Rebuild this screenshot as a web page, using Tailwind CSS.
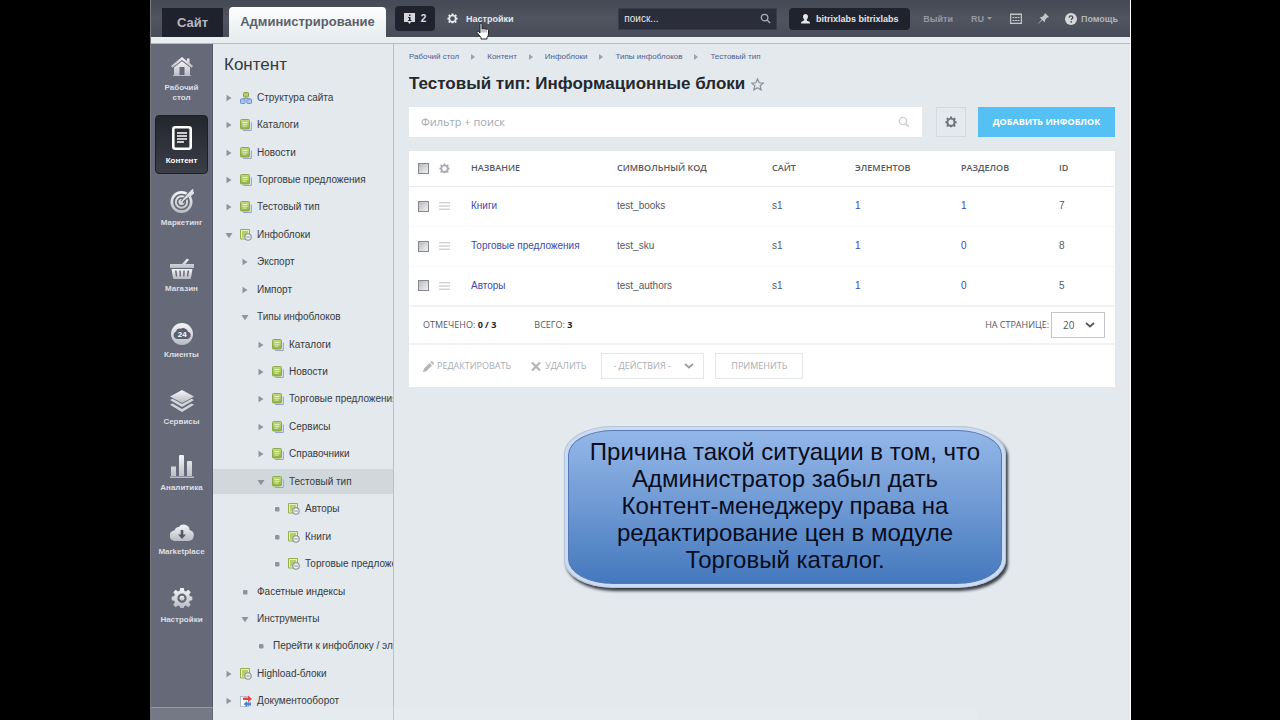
<!DOCTYPE html>
<html lang="ru">
<head>
<meta charset="utf-8">
<title>Тестовый тип: Информационные блоки</title>
<script src="https://cdn.jsdelivr.net/npm/@tailwindcss/browser@4"></script>
</head>
<body class="bg-black font-['Liberation_Sans',Arial,sans-serif] text-[10px] leading-3 text-[#363b40]">
<svg class="absolute h-0 w-0" aria-hidden="true">
  <defs>
    <linearGradient id="metal" x1="0" y1="0" x2="0" y2="1"><stop offset="0" stop-color="#f4f5f7"/><stop offset="1" stop-color="#b9bbc3"/></linearGradient>
    <linearGradient id="leaf" x1="0" y1="0" x2="0" y2="1"><stop offset="0" stop-color="#c3d97d"/><stop offset="1" stop-color="#8fb43a"/></linearGradient>
    <symbol id="arrow" viewBox="0 0 8 8"><path d="M1.500 .8 6.500 4 1.500 7.200z" fill="#8e949c"/></symbol>
    <symbol id="open" viewBox="0 0 8 8"><path d="M.5 2h7L4 7.200z" fill="#8e949c"/></symbol>
    <symbol id="dot" viewBox="0 0 8 8"><rect x="2" y="2" width="4.500" height="4.500" rx="1" fill="#8e949c"/></symbol>
    <symbol id="docs" viewBox="0 0 12 12"><path d="M3 11.400h8.300V3.500" fill="#e8ecf8" stroke="#8f9bcf" stroke-width="1"/><rect x=".5" y=".5" width="9" height="9.500" rx="1" fill="url(#leaf)" stroke="#8cab4c"/><path d="M2.500 3.500h5M2.500 5.300h5M2.500 7.100h4" stroke="#f1f7da" stroke-width=".8"/></symbol>
    <symbol id="docgear" viewBox="0 0 12 12"><path d="M.5.500h9v9.500h-9z" fill="#e2edc0" stroke="#94b14c"/><path d="M2 2h6v3L4 8.500H2z" fill="#b5d069"/><circle cx="8" cy="8" r="3.200" fill="#eceef0" stroke="#8d9298" stroke-width="1.100"/><path d="M6.300 8h3.400" stroke="#8d9298"/></symbol>
    <symbol id="struct" viewBox="0 0 12 12"><path d="M6 4v3M2.500 7.500v-1h7v1" stroke="#96a2b8" fill="none"/><rect x="3.500" y=".5" width="5" height="4.500" rx=".8" fill="#b4d062" stroke="#82a33d"/><rect x=".5" y="7" width="4.600" height="4.500" rx=".8" fill="#a9c5f3" stroke="#6a8fd6"/><rect x="6.900" y="7" width="4.600" height="4.500" rx=".8" fill="#a9c5f3" stroke="#6a8fd6"/></symbol>
    <symbol id="flow" viewBox="0 0 12 12"><rect x=".5" y="1.500" width="8" height="10" fill="#fff" stroke="#b4bccb"/><path d="M3 2.500h5V.5l4 3.500-4 3V5H3z" fill="#e0473f"/><path d="M11 7.500H7v-1.500L3.500 9 7 12v-1.500h4z" fill="#4f82d9"/></symbol>
    <symbol id="gear" viewBox="0 0 24 24"><path fill-rule="evenodd" d="M10 1h4l.6 3.200 1.900.8L19.200 3.100 22 5.900l-1.900 2.700.8 1.900 3.100.5v4l-3.200.6-.7 1.900 1.800 2.700-2.800 2.800-2.700-1.900-1.900.8L14 24h-4l-.6-2.100-1.900-.8-2.700 1.900L2 20.200l1.900-2.700-.8-1.900L0 15v-4l3.100-.5.8-1.900L2 5.900l2.800-2.800L7.500 5l1.900-.8zM12 7.500a5.300 5.300 0 1 0 0 10.600 5.300 5.300 0 0 0 0-10.600z"/></symbol>
    <symbol id="lens" viewBox="0 0 12 12"><circle cx="5" cy="5" r="3.600" fill="none" stroke="currentColor" stroke-width="1.400"/><path d="m7.700 7.700 3.300 3.300" stroke="currentColor" stroke-width="1.600"/></symbol>
    <symbol id="bars" viewBox="0 0 12 8"><path d="M0 .5h12M0 4h12M0 7.500h12" stroke="#b4b8be"/></symbol>
    <symbol id="chev" viewBox="0 0 10 6"><path d="m1 1 4 3.500L9 1" fill="none" stroke="currentColor" stroke-width="1.800"/></symbol>
  </defs>
</svg>

<div class="relative mr-[149px] ml-[150px] flex h-screen flex-col overflow-hidden border-r border-l border-r-white border-l-[#77797f] bg-[#e3e9ed]">
  <header class="flex h-[37px] shrink-0 items-center bg-linear-to-b from-[#454955] via-[#50545f] to-[#484c58] pr-3 pl-[11px] text-[10px] font-bold text-[#b6b9c1]">
    <a href="#" class="flex h-[29px] w-[61px] items-center justify-center self-end bg-[#1f222d] text-[13px] text-[#b5b8c0]">Сайт</a>
    <a href="#" class="ml-[6px] flex h-[30px] w-[157px] items-center justify-center self-end rounded-t-sm bg-linear-to-b from-white to-[#e6ecef] text-[13px] text-[#5d6169]">Администрирование</a>
    <a href="#" class="ml-[9px] flex h-[25px] w-10 items-center justify-center gap-[6px] rounded bg-[#20232e] text-[#dfe1e5]" aria-label="Уведомления: 2">
      <svg class="h-[11px] w-[11px]" viewBox="0 0 11 11"><path d="M0 0h11v9H7l-1.500 2L4 9H0z" fill="#d4d6db"/><path d="M5 1.500h1.500v1.500H5zM4 4h2.500v3H7.500v1H4V7h1V5H4z" fill="#20232e"/></svg>2</a>
    <a href="#" class="ml-3 flex items-center gap-2 text-[9px] text-[#e6e7ea]"><svg class="h-[11px] w-[11px]" fill="#e6e7ea" viewBox="0 0 24 25"><use href="#gear" width="24" height="24"/></svg>Настройки</a>
    <div class="flex-1"></div>
    <label class="flex h-[22px] w-[159px] items-center border border-[#3a3d49] bg-[#2b2e3a] pr-[5px] pl-[5px]">
      <input type="text" value="поиск..." aria-label="Поиск" class="w-0 min-w-0 flex-1 bg-transparent text-[10px] font-normal text-[#e6e7ea] outline-none">
      <svg class="h-[11px] w-[11px] text-[#a9acb5]"><use href="#lens"/></svg>
    </label>
    <a href="#" class="ml-3 flex h-[22px] w-[121px] items-center justify-center gap-[6px] rounded bg-[#20232e] text-[9px] text-[#e3e5e9]"><svg class="h-[10px] w-[9px]" viewBox="0 0 9 10" fill="#e3e5e9"><path d="M4.500 0C6 0 7 1 7 2.800 7 4.300 6.200 5 5.700 5.700c0 1.300.8 1.200 1.700 1.600C8.600 7.800 9 8 9 9.500H0C0 8 .4 7.800 1.600 7.300c.9-.4 1.700-.3 1.700-1.600C2.800 5 2 4.300 2 2.800 2 1 3 0 4.500 0z"/></svg>bitrixlabs bitrixlabs</a>
    <a href="#" class="ml-[13px] text-[9px] text-[#9598a2]">Выйти</a>
    <a href="#" class="ml-[18px] flex items-center gap-[3px] text-[9px] text-[#9598a2]">RU<svg class="h-[3px] w-[5px]" viewBox="0 0 5 3"><path d="M0 0h5L2.500 3z" fill="#9598a2"/></svg></a>
    <a href="#" aria-label="Панель" class="ml-[18px]"><svg class="h-[11px] w-3" viewBox="0 0 12 11"><path d="M.6 1h10.800v9.400H.6zM0 1.500h12" fill="none" stroke="#c3c5cc" stroke-width="1.200"/><path d="M2.500 4.500h7M2.500 7.500h7" stroke="#c3c5cc" stroke-dasharray="2 .5"/></svg></a>
    <a href="#" aria-label="Закрепить" class="ml-4"><svg class="h-[11px] w-[11px]" viewBox="0 0 11 11"><path d="M7 0l4 4-1 .7-.8-.1L6.900 7c.3 1 .1 1.700-.4 2.300L4.300 7.100.6 10.700l-.3-.3L3.700 6.500 1.700 4.500c.6-.6 1.500-.7 2.300-.4l2.400-2.300V1z" fill="#c3c5cc"/></svg></a>
    <a href="#" class="ml-4 flex items-center gap-1 text-[9px] text-[#b0b3bb]"><svg class="h-3 w-3" viewBox="0 0 12 12"><circle cx="6" cy="6" r="6" fill="#d6d8dc"/><path d="M4.200 4.700C4.200 3.400 5 2.900 6 2.900s1.800.6 1.800 1.600C7.800 5.700 6.200 5.800 6.200 7" fill="none" stroke="#4b4f5b" stroke-width="1.400"/><circle cx="6.200" cy="8.800" r=".9" fill="#4b4f5b"/></svg>Помощь</a>
  </header>
  <div class="flex h-[7px] shrink-0 border-b border-[#b4bec2] bg-[#e8edf0]"></div>

  <div class="flex min-h-0 flex-1">
    <nav class="w-[62px] shrink-0 border-r border-[#565967] bg-[#666977] text-center text-[8px] leading-[10px] font-bold text-[#dddfe4]">
      <a href="#" class="flex h-[71px] flex-col items-center pt-[13px]"><svg class="mb-[7px] h-[19px] w-[22px]" viewBox="0 0 22 19"><path d="M11 0 0 9l1.500 1.700L11 3l9.500 7.700L22 9l-3.500-3V1.500H16V4z" fill="url(#metal)"/><path fill-rule="evenodd" d="M3 10.500 11 4.200l8 6.300V18h1v1H2v-1h1zM8.500 10v8h5v-8z" fill="url(#metal)"/></svg>Рабочий<br>стол</a>
      <a href="#" class="mx-1 flex h-[59px] flex-col items-center rounded border border-[#1d1f26] bg-linear-to-b from-[#24262e] to-[#3b3e47] pt-[10px] text-white"><svg class="mb-[6px] h-[24px] w-[20px]" viewBox="0 0 20 24"><rect x="1.300" y="1.300" width="17.400" height="21.400" rx="2" fill="none" stroke="#fff" stroke-width="2.600"/><path d="M5 7h10M5 10h10M5 13h10M5 16h7" stroke="#fff" stroke-width="1.300"/></svg>Контент</a>
      <a href="#" class="flex h-[54px] flex-col items-center justify-end"><svg class="mb-[5px] h-[24px] w-6" viewBox="0 0 24 24"><circle cx="11.500" cy="13" r="11" fill="url(#metal)"/><circle cx="11.500" cy="13" r="7.500" fill="none" stroke="#666977" stroke-width="1.700"/><circle cx="11.500" cy="13" r="3.900" fill="none" stroke="#666977" stroke-width="1.600"/><path d="m12 13 7.500-8.500" stroke="#666977" stroke-width="4"/><path d="M11.500 13 19 4.500 22.500 1v2.500H24L20 7" fill="url(#metal)" stroke="#e0e2e6" stroke-width="1.500"/></svg>Маркетинг</a>
      <a href="#" class="flex h-[66px] flex-col items-center justify-end"><svg class="mb-[5px] h-[21px] w-6" viewBox="0 0 24 21"><path d="M0 6h12L17 .5l2 1.300L15.500 6H24v4H0z" fill="url(#metal)"/><path fill-rule="evenodd" d="M1.500 11h21L21 20c-.1.700-.5 1-1.200 1H4.200c-.7 0-1.100-.3-1.200-1zM5 12.500l.8 6h1.400l-.6-6zm4.300 0 .3 6H11l-.2-6zm4 0-.2 6h1.400l.3-6zm4.200 0-.6 6h1.400l.8-6z" fill="url(#metal)"/></svg>Магазин</a>
      <a href="#" class="flex h-[66px] flex-col items-center justify-end"><svg class="mb-[5px] h-[22px] w-[22px]" viewBox="0 0 22 22"><circle cx="11" cy="11" r="11" fill="url(#metal)"/><path d="M6 16a4 4 0 0 1-1-7.600 3.600 3.600 0 0 1 4.500-2.600 5 5 0 0 1 7.500 3A3.700 3.700 0 0 1 16.500 16z" fill="#5c5f6d"/><text x="11.300" y="14" text-anchor="middle" font-size="8" fill="#fff">24</text></svg>Клиенты</a>
      <a href="#" class="flex h-[67px] flex-col items-center justify-end"><svg class="mb-[5px] h-[22px] w-6" viewBox="0 0 24 22"><path d="m12 0 12 6.500L12 13 0 6.500z" fill="url(#metal)"/><path d="m0 10 2.500-1.300L12 14l9.500-5.300L24 10l-12 7zM0 14.800l2.500-1.300L12 19l9.500-5.500L24 14.800 12 22z" fill="#d3d5da"/></svg>Сервисы</a>
      <a href="#" class="flex h-[66px] flex-col items-center justify-end"><svg class="mb-[5px] h-[23px] w-6" viewBox="0 0 24 23"><path d="M1 11.500h5V21H1zM9 1q0-1 1-1h3q1 0 1 1v20H9zM17 7q0-1 1-1h3q1 0 1 1v14h-5zM0 21.500h24V23H0z" fill="url(#metal)"/></svg>Аналитика</a>
      <a href="#" class="flex h-[64px] flex-col items-center justify-end"><svg class="mb-[6px] h-[17px] w-6" viewBox="0 0 24 17"><path d="M5.500 17A5.300 5.300 0 0 1 4.400 6.400 5 5 0 0 1 8.800 3 6 6 0 0 1 19.600 6 5.600 5.600 0 0 1 18.500 17z" fill="url(#metal)"/><path d="M10.700 6h2.600v4.500H16L12 15l-4-4.500h2.700z" fill="#555866"/></svg>Marketplace</a>
      <a href="#" class="flex h-[68px] flex-col items-center justify-end"><svg class="mb-[6px] h-[22px] w-[22px]" viewBox="0 0 24 25" fill="url(#metal)"><use href="#gear" width="24" height="24"/><circle cx="12" cy="12.800" r="2.800"/></svg>Настройки</a>
    </nav>

    <aside class="w-[181px] shrink-0 overflow-hidden border-r border-[#b9c0c8] whitespace-nowrap">
      <h2 class="px-[11px] pt-[11px] text-[17px] leading-5 text-[#363b40]">Контент</h2>
      <ul class="mt-[9px] grid h-[631px] auto-rows-fr [&_a]:flex [&_a]:h-[25px] [&_a]:items-center [&_svg]:shrink-0">
        <li class="flex items-center"><a href="#" class="w-full pl-3"><svg class="mr-[7px] h-2 w-2"><use href="#arrow"/></svg><svg class="mr-[5px] h-3 w-3"><use href="#struct"/></svg>Структура сайта</a></li>
        <li class="flex items-center"><a href="#" class="w-full pl-3"><svg class="mr-[7px] h-2 w-2"><use href="#arrow"/></svg><svg class="mr-[5px] h-3 w-3"><use href="#docs"/></svg>Каталоги</a></li>
        <li class="flex items-center"><a href="#" class="w-full pl-3"><svg class="mr-[7px] h-2 w-2"><use href="#arrow"/></svg><svg class="mr-[5px] h-3 w-3"><use href="#docs"/></svg>Новости</a></li>
        <li class="flex items-center"><a href="#" class="w-full pl-3"><svg class="mr-[7px] h-2 w-2"><use href="#arrow"/></svg><svg class="mr-[5px] h-3 w-3"><use href="#docs"/></svg>Торговые предложения</a></li>
        <li class="flex items-center"><a href="#" class="w-full pl-3"><svg class="mr-[7px] h-2 w-2"><use href="#arrow"/></svg><svg class="mr-[5px] h-3 w-3"><use href="#docs"/></svg>Тестовый тип</a></li>
        <li class="flex items-center"><a href="#" class="w-full pl-3"><svg class="mr-[7px] h-2 w-2"><use href="#open"/></svg><svg class="mr-[5px] h-3 w-3"><use href="#docgear"/></svg>Инфоблоки</a></li>
        <li class="flex items-center"><a href="#" class="w-full pl-7"><svg class="mr-2 h-2 w-2"><use href="#arrow"/></svg>Экспорт</a></li>
        <li class="flex items-center"><a href="#" class="w-full pl-7"><svg class="mr-2 h-2 w-2"><use href="#arrow"/></svg>Импорт</a></li>
        <li class="flex items-center"><a href="#" class="w-full pl-7"><svg class="mr-2 h-2 w-2"><use href="#open"/></svg>Типы инфоблоков</a></li>
        <li class="flex items-center"><a href="#" class="w-full pl-11"><svg class="mr-[7px] h-2 w-2"><use href="#arrow"/></svg><svg class="mr-[5px] h-3 w-3"><use href="#docs"/></svg>Каталоги</a></li>
        <li class="flex items-center"><a href="#" class="w-full pl-11"><svg class="mr-[7px] h-2 w-2"><use href="#arrow"/></svg><svg class="mr-[5px] h-3 w-3"><use href="#docs"/></svg>Новости</a></li>
        <li class="flex items-center"><a href="#" class="w-full pl-11"><svg class="mr-[7px] h-2 w-2"><use href="#arrow"/></svg><svg class="mr-[5px] h-3 w-3"><use href="#docs"/></svg>Торговые предложения</a></li>
        <li class="flex items-center"><a href="#" class="w-full pl-11"><svg class="mr-[7px] h-2 w-2"><use href="#arrow"/></svg><svg class="mr-[5px] h-3 w-3"><use href="#docs"/></svg>Сервисы</a></li>
        <li class="flex items-center"><a href="#" class="w-full pl-11"><svg class="mr-[7px] h-2 w-2"><use href="#arrow"/></svg><svg class="mr-[5px] h-3 w-3"><use href="#docs"/></svg>Справочники</a></li>
        <li class="flex items-center"><a href="#" aria-current="page" class="w-full bg-[#d1d8dc] pl-11"><svg class="mr-[7px] h-2 w-2"><use href="#open"/></svg><svg class="mr-[5px] h-3 w-3"><use href="#docs"/></svg>Тестовый тип</a></li>
        <li class="flex items-center"><a href="#" class="w-full pl-[60px]"><svg class="mr-[7px] h-2 w-2"><use href="#dot"/></svg><svg class="mr-[5px] h-3 w-3"><use href="#docgear"/></svg>Авторы</a></li>
        <li class="flex items-center"><a href="#" class="w-full pl-[60px]"><svg class="mr-[7px] h-2 w-2"><use href="#dot"/></svg><svg class="mr-[5px] h-3 w-3"><use href="#docgear"/></svg>Книги</a></li>
        <li class="flex items-center"><a href="#" class="w-full pl-[60px]"><svg class="mr-[7px] h-2 w-2"><use href="#dot"/></svg><svg class="mr-[5px] h-3 w-3"><use href="#docgear"/></svg>Торговые предложения</a></li>
        <li class="flex items-center"><a href="#" class="w-full pl-7"><svg class="mr-2 h-2 w-2"><use href="#dot"/></svg>Фасетные индексы</a></li>
        <li class="flex items-center"><a href="#" class="w-full pl-7"><svg class="mr-2 h-2 w-2"><use href="#open"/></svg>Инструменты</a></li>
        <li class="flex items-center"><a href="#" class="w-full pl-11"><svg class="mr-2 h-2 w-2"><use href="#dot"/></svg>Перейти к инфоблоку / элементу</a></li>
        <li class="flex items-center"><a href="#" class="w-full pl-3"><svg class="mr-[7px] h-2 w-2"><use href="#arrow"/></svg><svg class="mr-[5px] h-3 w-3"><use href="#docgear"/></svg>Highload-блоки</a></li>
        <li class="flex items-center"><a href="#" class="w-full pl-3"><svg class="mr-[7px] h-2 w-2"><use href="#arrow"/></svg><svg class="mr-[5px] h-3 w-3"><use href="#flow"/></svg>Документооборот</a></li>
      </ul>
    </aside>

    <main class="min-w-0 flex-1 pr-[15px] pl-[15px]">
      <nav class="flex items-center gap-3 pt-[7px] text-[8px] text-[#4d5f94]">
        <a href="#">Рабочий стол</a><svg class="h-[6px] w-1" viewBox="0 0 4 6"><path d="M0 0l4 3-4 3z" fill="#9aa3ae"/></svg>
        <a href="#">Контент</a><svg class="h-[6px] w-1" viewBox="0 0 4 6"><path d="M0 0l4 3-4 3z" fill="#9aa3ae"/></svg>
        <a href="#">Инфоблоки</a><svg class="h-[6px] w-1" viewBox="0 0 4 6"><path d="M0 0l4 3-4 3z" fill="#9aa3ae"/></svg>
        <a href="#">Типы инфоблоков</a><svg class="h-[6px] w-1" viewBox="0 0 4 6"><path d="M0 0l4 3-4 3z" fill="#9aa3ae"/></svg>
        <a href="#">Тестовый тип</a>
      </nav>
      <h1 class="mt-[11px] flex items-center gap-[6px] text-[17px] leading-5 font-bold text-[#25282c]">Тестовый тип: Информационные блоки
        <svg class="h-[13px] w-[13px]" viewBox="0 0 14 14"><path d="m7 1 1.800 4.100 4.400.4-3.300 2.900 1 4.400L7 10.500l-3.900 2.300 1-4.400L.8 5.500l4.400-.4z" fill="none" stroke="#8b8f96" stroke-width="1.300"/></svg></h1>
      <div class="mt-[13px] flex h-[30px] items-stretch font-['Open_Sans',sans-serif]">
        <label class="flex flex-1 items-center bg-white pr-3 pl-3"><input type="text" placeholder="Фильтр + поиск" aria-label="Фильтр и поиск" class="min-w-0 flex-1 text-[11px] outline-none placeholder:text-[#a3a9b0]"><svg class="h-3 w-3 text-[#cfcfd0]"><use href="#lens"/></svg></label>
        <button type="button" aria-label="Настройки списка" class="ml-[14px] flex w-[30px] items-center justify-center border border-[#d3d9de]"><svg class="h-3 w-3" viewBox="0 0 24 25" fill="#6e747c"><use href="#gear" width="24" height="24"/></svg></button>
        <button type="button" class="ml-3 w-[137px] bg-[#55c0f4] text-[9px] font-bold text-white">ДОБАВИТЬ ИНФОБЛОК</button>
      </div>

      <section class="mt-[14px] bg-white">
        <table class="w-full table-fixed text-left text-[10px] text-[#55595f]">
          <colgroup><col class="w-[30px]"><col class="w-[32px]"><col class="w-[146px]"><col class="w-[155px]"><col class="w-[83px]"><col class="w-[106px]"><col class="w-[98px]"><col></colgroup>
          <thead class="font-['Open_Sans',sans-serif] text-[9px]"><tr class="h-[35px] border-b border-[#e7eaee] [&_th]:font-semibold">
            <th class="pl-[9px]"><input type="checkbox" aria-label="Выбрать все" class="block h-[11px] w-[11px] appearance-none border border-[#85888c] bg-linear-to-br from-[#b9bcc0] to-[#f1f1f1]"></th>
            <th><button type="button" aria-label="Столбцы" class="block"><svg class="h-[11px] w-[11px]" viewBox="0 0 24 25" fill="#a9adb3"><use href="#gear" width="24" height="24"/></svg></button></th>
            <th>НАЗВАНИЕ</th><th>СИМВОЛЬНЫЙ КОД</th><th>САЙТ</th><th>ЭЛЕМЕНТОВ</th><th>РАЗДЕЛОВ</th><th>ID</th></tr></thead>
          <tbody class="[&_a]:text-[#4149ac]">
            <tr class="h-10 border-b border-[#f8f9fa]"><td class="pl-[9px]"><input type="checkbox" aria-label="Книги" class="block h-[11px] w-[11px] appearance-none border border-[#85888c] bg-linear-to-br from-[#b9bcc0] to-[#f1f1f1]"></td><td><svg class="h-2 w-[11px]"><use href="#bars"/></svg></td><td><a href="#">Книги</a></td><td>test_books</td><td>s1</td><td><a href="#">1</a></td><td><a href="#">1</a></td><td>7</td></tr>
            <tr class="h-10 border-b border-[#f8f9fa]"><td class="pl-[9px]"><input type="checkbox" aria-label="Торговые предложения" class="block h-[11px] w-[11px] appearance-none border border-[#85888c] bg-linear-to-br from-[#b9bcc0] to-[#f1f1f1]"></td><td><svg class="h-2 w-[11px]"><use href="#bars"/></svg></td><td><a href="#">Торговые предложения</a></td><td>test_sku</td><td>s1</td><td><a href="#">1</a></td><td><a href="#">0</a></td><td>8</td></tr>
            <tr class="h-10 border-b-2 border-[#f0f2f4]"><td class="pl-[9px]"><input type="checkbox" aria-label="Авторы" class="block h-[11px] w-[11px] appearance-none border border-[#85888c] bg-linear-to-br from-[#b9bcc0] to-[#f1f1f1]"></td><td><svg class="h-2 w-[11px]"><use href="#bars"/></svg></td><td><a href="#">Авторы</a></td><td>test_authors</td><td>s1</td><td><a href="#">1</a></td><td><a href="#">0</a></td><td>5</td></tr>
          </tbody>
        </table>
        <div class="flex h-[38px] items-center border-b-2 border-[#f0f2f4] pr-[10px] pl-[14px] font-['Open_Sans',sans-serif] text-[9px] text-[#55595f]">
          <span>ОТМЕЧЕНО: <b class="text-[#222529]">0 / 3</b></span>
          <span class="ml-[38px]">ВСЕГО: <b class="text-[#222529]">3</b></span>
          <label for="size" class="mr-[2px] ml-auto">НА СТРАНИЦЕ:</label>
          <span class="relative"><select id="size" class="block h-[26px] w-[54px] appearance-none border border-[#c2c6ca] bg-white pl-[11px] text-[10px]"><option>20</option></select><svg class="pointer-events-none absolute top-[10px] right-[10px] h-[6px] w-[10px] text-[#55595f]"><use href="#chev"/></svg></span>
        </div>
        <div class="flex h-[42px] items-center pl-[14px] font-['Open_Sans',sans-serif] text-[9px] text-[#a9adb3]">
          <button type="button" class="flex items-center gap-[3px]"><svg class="h-[11px] w-[11px]" viewBox="0 0 11 11" fill="#b3b7bc"><path d="M0 11l.8-3.300L6.500 2 9 4.500 3.300 10.200zM7.200 1.300 8.300.2q.5-.4 1 0l1.500 1.500q.4.500 0 1L9.700 3.800z"/></svg>РЕДАКТИРОВАТЬ</button>
          <button type="button" class="ml-5 flex items-center gap-1"><svg class="h-[9px] w-[10px]" viewBox="0 0 10 9"><path d="m1 .5 8 8m0-8-8 8" stroke="#b3b7bc" stroke-width="2.300"/></svg>УДАЛИТЬ</button>
          <span class="relative ml-[15px]"><select aria-label="Действия" class="block h-[26px] w-[103px] appearance-none border border-[#e4e7ea] bg-white pl-[11px]"><option>- ДЕЙСТВИЯ -</option></select><svg class="pointer-events-none absolute top-[10px] right-[10px] h-[6px] w-[10px] text-[#9a9ea4]"><use href="#chev"/></svg></span>
          <button type="button" class="ml-[11px] h-[26px] w-[88px] border border-[#e4e7ea]">ПРИМЕНИТЬ</button>
        </div>
      </section>
    </main>
  </div>

  <div class="absolute bottom-0 left-0 h-[13px] w-[827px] border-t border-r border-[#dfe3e6]/30 bg-white/10"></div>

  <div class="absolute top-[426px] left-[413px] w-[442px] rounded-[48px/28px] border border-[#b4c4dc] bg-[#cbdbf1] p-[3px] shadow-[2px_3px_3px_#3a3f48]">
    <p class="rounded-[45px/25px] border border-[#5578b4] bg-linear-to-b from-[#94b7e8] via-[#6e99d3] to-[#4478bd] pt-[7px] pb-[10px] text-center text-[24px] leading-[27px] text-[#0a0c20]">Причина такой ситуации в том, что<br>Администратор забыл дать<br>Контент-менеджеру права на<br>редактирование цен в модуле<br>Торговый каталог.</p>
  </div>

  <svg class="absolute top-[22px] left-[325px] h-[18px] w-[14px]" viewBox="0 0 14 18" aria-hidden="true"><path d="M4 1.500q1-1 2 0V7q1-.9 2 0 1.200-.8 2 .3 1.800-.6 2.500.7V12q0 2-1.500 3.500V17H5v-1.500Q3 13 1 10.500q0-1.500 1.500-1L4 11z" fill="#fff" stroke="#22252e" stroke-width="1"/><path d="M6 7.500v3M8 7.500v3M10 8v2.500" stroke="#555" stroke-width=".7"/></svg>
</div>
</body>
</html>
